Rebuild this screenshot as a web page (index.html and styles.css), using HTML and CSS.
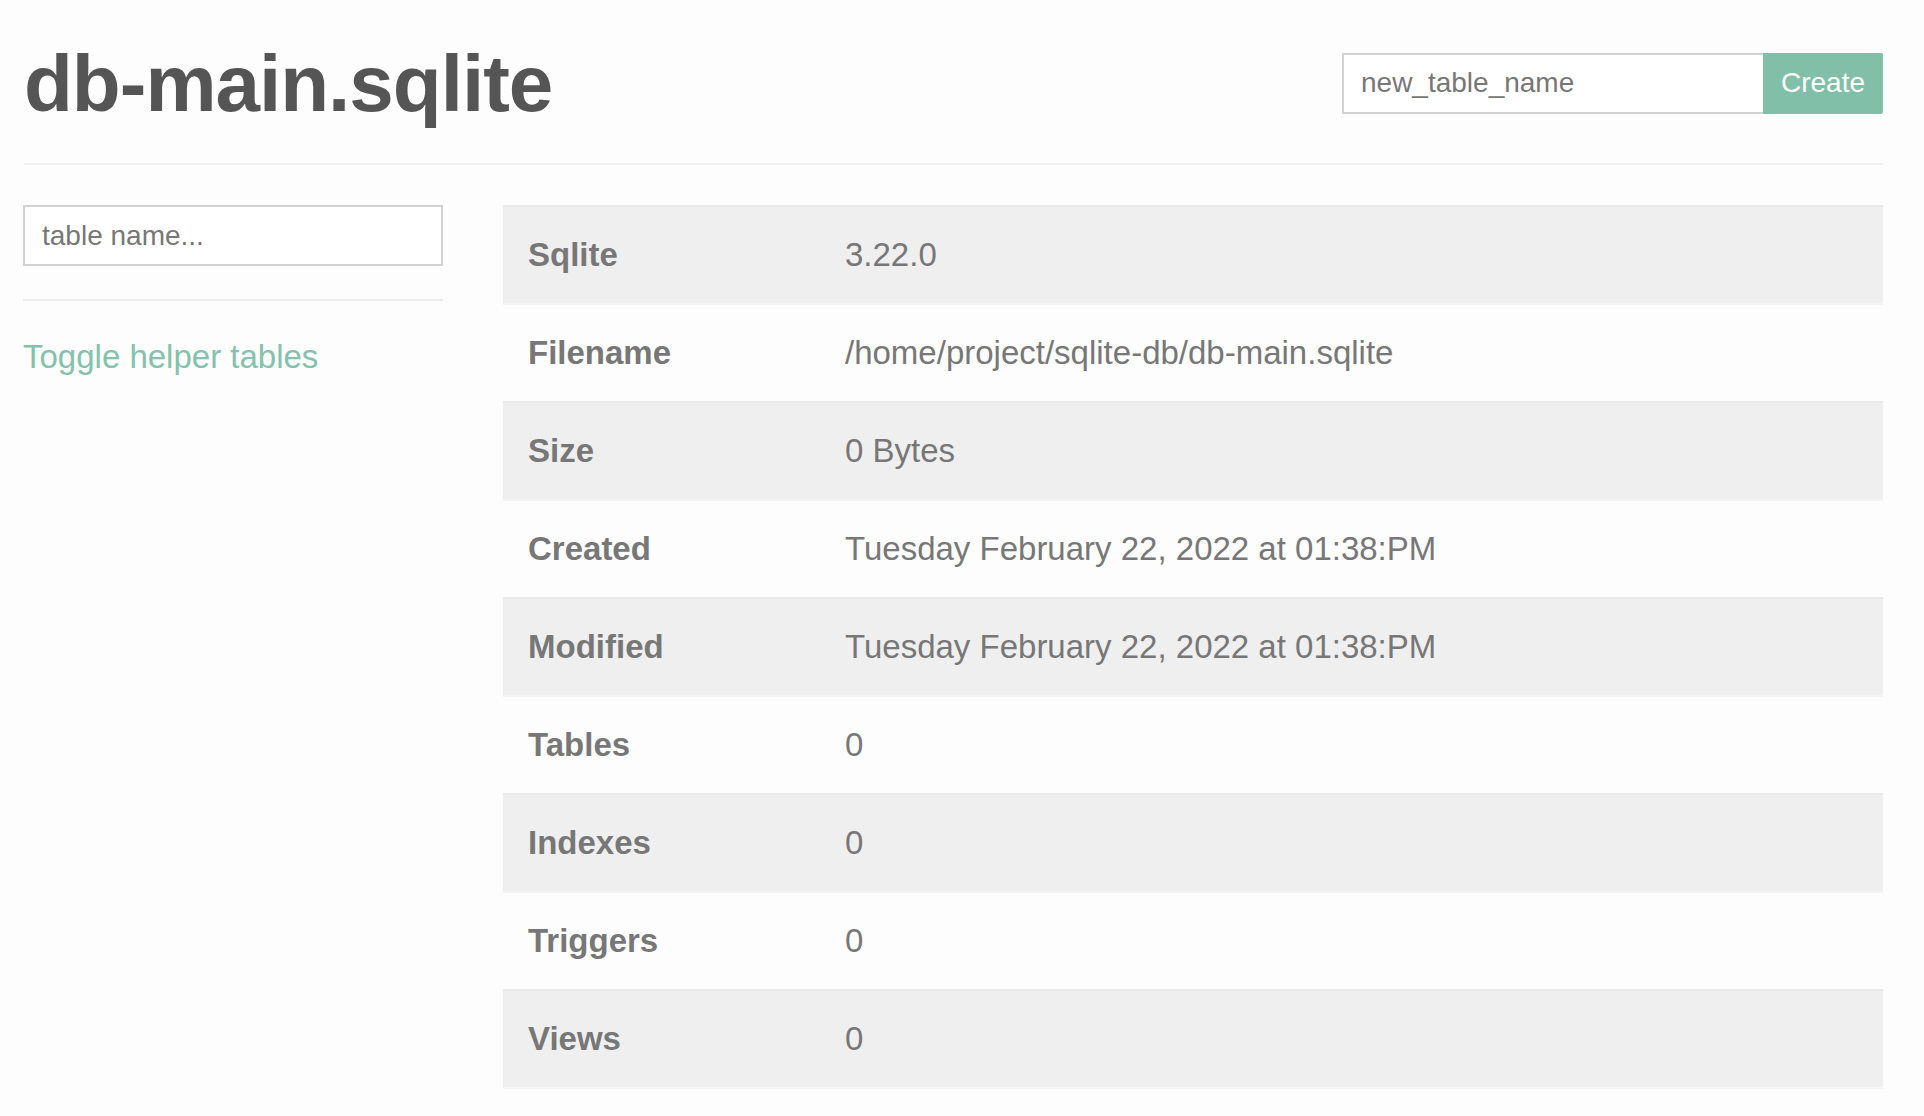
FILE: index.html
```html
<!DOCTYPE html>
<html lang="en">
<head>
<meta charset="utf-8">
<title>db-main.sqlite</title>
<link rel="stylesheet" href="styles.css">
</head>
<body>
<div class="page">
  <header class="header">
    <h1 class="title">db-main.sqlite</h1>
    <form class="create-form">
      <input class="create-input" type="text" placeholder="new_table_name">
      <button class="create-btn" type="button">Create</button>
    </form>
  </header>
  <main class="main">
    <aside class="sidebar">
      <input class="search-input" type="text" placeholder="table name...">
      <hr class="side-rule">
      <a class="toggle-link" href="#">Toggle helper tables</a>
    </aside>
    <section class="content">
      <table class="info">
        <tbody>
          <tr><th>Sqlite</th><td>3.22.0</td></tr>
          <tr><th>Filename</th><td>/home/project/sqlite-db/db-main.sqlite</td></tr>
          <tr><th>Size</th><td>0 Bytes</td></tr>
          <tr><th>Created</th><td>Tuesday February 22, 2022 at 01:38:PM</td></tr>
          <tr><th>Modified</th><td>Tuesday February 22, 2022 at 01:38:PM</td></tr>
          <tr><th>Tables</th><td>0</td></tr>
          <tr><th>Indexes</th><td>0</td></tr>
          <tr><th>Triggers</th><td>0</td></tr>
          <tr><th>Views</th><td>0</td></tr>
        </tbody>
      </table>
    </section>
  </main>
</div>
</body>
</html>
```
FILE: styles.css
```css
* { box-sizing: border-box; }

html, body {
  margin: 0;
  background: #fdfdfd;
}

body {
  font-family: "Liberation Sans", Helvetica, Arial, sans-serif;
  color: #777;
}

.page {
  width: 1883px;
  padding-left: 24px;
}

.header {
  display: flex;
  justify-content: space-between;
  align-items: center;
  padding-top: 38px;
  padding-bottom: 33px;
  border-bottom: 2px solid #f0f0f0;
}

.title {
  margin: 0;
  font-size: 80px;
  font-weight: bold;
  letter-spacing: -1px;
  line-height: 92px;
  color: #555;
}

.create-form {
  display: flex;
  align-items: stretch;
  height: 61px;
  margin-top: -2px;
}

.create-input {
  width: 421px;
  height: 61px;
  margin: 0;
  border: 2px solid #d2d2d2;
  border-right: none;
  padding: 0 17px;
  font-family: inherit;
  font-size: 28px;
  color: #666;
  background: #fff;
  outline: none;
}

.create-input::placeholder { color: #777; }

.create-btn {
  width: 120px;
  margin: 0;
  border: none;
  border-radius: 0 2px 2px 0;
  background: #82bfa9;
  color: #fff;
  font-family: inherit;
  font-size: 28px;
  padding: 0;
}

.main {
  display: grid;
  grid-template-columns: 420px 1fr;
  gap: 60px;
  margin-top: 40px;
  margin-left: -1px;
}

.sidebar {
  display: flex;
  flex-direction: column;
}

.search-input {
  width: 420px;
  height: 61px;
  margin: 0;
  border: 2px solid #d2d2d2;
  padding: 0 17px;
  font-family: inherit;
  font-size: 28px;
  color: #666;
  background: #fff;
  outline: none;
}

.search-input::placeholder { color: #777; }

.side-rule {
  margin: 33px 0 32px;
  border: none;
  border-top: 2px solid #ececec;
  height: 0;
}

.toggle-link {
  font-size: 33px;
  line-height: 48px;
  color: #84c2ad;
  text-decoration: none;
}

.info {
  width: 100%;
  table-layout: fixed;
  border-collapse: collapse;
  font-size: 33px;
  line-height: 48px;
}

.info tr {
  border-top: 2px solid #e9e9e9;
}

.info tr:nth-child(odd) { background: #efefef; }
.info tr:nth-child(even) { background: #fdfdfd; border-top-color: #f4f4f4; }
.info tr:last-child { border-bottom: 2px solid #f5f5f5; }

.info th,
.info td {
  padding: 24px 25px;
  text-align: left;
  vertical-align: middle;
  color: #777;
}

.info th {
  width: 317px;
  font-weight: bold;
}

.info td {
  font-weight: normal;
}
```
